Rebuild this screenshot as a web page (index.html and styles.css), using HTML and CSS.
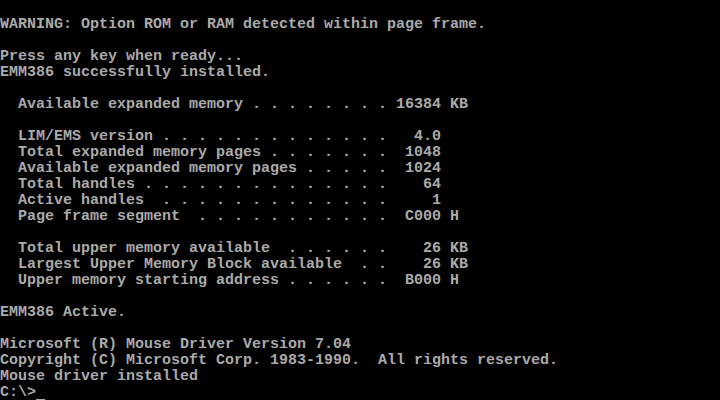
FILE: index.html
```html
<!DOCTYPE html>
<html lang="en">
<head>
    <meta charset="UTF-8">
    <meta name="viewport" content="width=device-width, initial-scale=1.0">
    <title>DOS Boot</title>
    <link rel="stylesheet" href="styles.css">
</head>
<body>
<pre class="screen">

WARNING: Option ROM or RAM detected within page frame.

Press any key when ready...
EMM386 successfully installed.

  Available expanded memory . . . . . . . . 16384 KB

  LIM/EMS version . . . . . . . . . . . . .   4.0
  Total expanded memory pages . . . . . . .  1048
  Available expanded memory pages . . . . .  1024
  Total handles . . . . . . . . . . . . . .    64
  Active handles  . . . . . . . . . . . . .     1
  Page frame segment  . . . . . . . . . . .  C000 H

  Total upper memory available  . . . . . .    26 KB
  Largest Upper Memory Block available  . .    26 KB
  Upper memory starting address . . . . . .  B000 H

EMM386 Active.

Microsoft (R) Mouse Driver Version 7.04
Copyright (C) Microsoft Corp. 1983-1990.  All rights reserved.
Mouse driver installed
C:\&gt;<span class="cursor"></span></pre>
</body>
</html>
```
FILE: styles.css
```css
* {
    margin: 0;
    padding: 0;
    box-sizing: border-box;
}
html, body {
    background: #000;
    width: 720px;
    height: 400px;
    overflow: hidden;
}
.screen {
    padding-top: 1px;
    font-family: "Liberation Mono", "DejaVu Sans Mono", monospace;
    font-size: 15px;
    font-weight: bold;
    line-height: 16px;
    color: #aaa;
    white-space: pre;
}
.cursor {
    display: inline-block;
    width: 9px;
    height: 2px;
    background: #aaa;
    vertical-align: -5px;
    animation: blink 1s steps(1) infinite;
}
@keyframes blink {
    50% { opacity: 0; }
}
```
